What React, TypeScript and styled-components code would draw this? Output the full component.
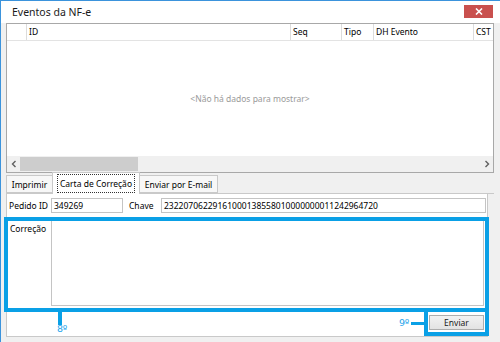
import React from "react";
import styled, { createGlobalStyle } from "styled-components";

const Global = createGlobalStyle`
  html, body { margin: 0; padding: 0; background: #f0f0f0; }
  * { box-sizing: border-box; }
`;

const ANNOT = "#0aa0e6";

const Window = styled.div`
  position: relative;
  width: 500px;
  height: 342px;
  background: #f0f0f0;
  border-top: 1px solid #3b93dc;
  border-left: 1px solid #3b93dc;
  overflow: hidden;
  font-family: "Noto Sans", "Open Sans", sans-serif;
  font-size: 8.5px;
  color: #000;
`;

const TitleBar = styled.div`
  height: 22px;
  background: #ffffff;
  display: flex;
  justify-content: space-between;
  align-items: flex-start;
  padding: 0 7px 0 11px;
`;

const Title = styled.div`
  font-size: 10.5px;
  line-height: 14px;
  margin-top: 4px;
  color: #1a1a1a;
`;

const CloseButton = styled.div`
  width: 29px;
  height: 13px;
  margin-top: 4px;
  background: #c9504e;
  display: flex;
  align-items: center;
  justify-content: center;
`;

const Content = styled.div`
  padding: 0 6px 0 5px;
`;

const Grid = styled.div`
  height: 150px;
  border: 1px solid #a8a8a8;
  background: #ffffff;
  display: flex;
  flex-direction: column;
`;

const HeaderRow = styled.div`
  height: 17px;
  display: grid;
  grid-template-columns: 20px 264px 51px 32px 100px 1fr;
  border-bottom: 1px solid #e3e3e3;
`;

const HeaderCell = styled.div<{ $last?: boolean }>`
  border-right: ${(p) => (p.$last ? "none" : "1px solid #dcdcdc")};
  padding-left: 2px;
  line-height: 16px;
  white-space: nowrap;
  overflow: hidden;
`;

const GridBody = styled.div`
  flex: 1;
  display: flex;
  align-items: center;
  justify-content: center;
  color: #9a9a9a;
`;

const HScroll = styled.div`
  height: 16px;
  background: #f0f0f0;
  display: flex;
  align-items: center;
`;

const ScrollArrow = styled.div`
  width: 13px;
  height: 14px;
  display: flex;
  align-items: center;
  justify-content: center;
`;

const ScrollTrack = styled.div`
  flex: 1;
  height: 14px;
  display: flex;
  align-items: stretch;
`;

const ScrollThumb = styled.div`
  width: 118px;
  background: #cdcdcd;
`;

const TabStrip = styled.div`
  height: 21px;
  display: flex;
  align-items: flex-end;
  border-bottom: 1px solid #c9c9c9;
`;

const Tab = styled.div<{ $active?: boolean; $w: number }>`
  width: ${(p) => p.$w}px;
  height: ${(p) => (p.$active ? 22 : 18)}px;
  margin-bottom: ${(p) => (p.$active ? -1 : 0)}px;
  background: ${(p) => (p.$active ? "#ffffff" : "#f7f7f7")};
  border: 1px solid #c9c9c9;
  border-bottom: ${(p) => (p.$active ? "none" : "1px solid #c9c9c9")};
  margin-left: ${(p) => (p.$active ? -1 : 0)}px;
  margin-right: ${(p) => (p.$active ? -1 : 0)}px;
  position: relative;
  z-index: ${(p) => (p.$active ? 1 : 0)};
  display: flex;
  align-items: center;
  justify-content: center;
  white-space: nowrap;
`;

const FocusLabel = styled.span`
  outline: 1px dotted #333;
  padding: 2px 2px;
  line-height: 13px;
`;

const Panel = styled.div`
  width: 482px;
  height: 143px;
  background: #ffffff;
  border: 1px solid #c9c9c9;
  border-top: none;
  display: flex;
  flex-direction: column;
  padding: 4px 1px 0 2px;
`;

const FieldRow = styled.div`
  display: flex;
  align-items: center;
  height: 15px;
`;

const Label = styled.div<{ $w: number; $ml?: number }>`
  width: ${(p) => p.$w}px;
  margin-left: ${(p) => p.$ml ?? 0}px;
  white-space: nowrap;
`;

const Input = styled.div<{ $w?: number }>`
  ${(p) => (p.$w ? `width: ${p.$w}px;` : "flex: 1;")}
  height: 15px;
  border: 1px solid #c4c4c4;
  background: #ffffff;
  padding-left: 2px;
  line-height: 13px;
  white-space: nowrap;
  overflow: hidden;
`;

const MemoRow = styled.div`
  display: flex;
  height: 86px;
  margin-top: 7px;
  margin-right: 2px;
`;

const MemoLabel = styled.div`
  width: 42px;
  padding-left: 1px;
  padding-top: 3px;
`;

const Memo = styled.div`
  flex: 1;
  border: 1px solid #c4c4c4;
  background: #ffffff;
`;

const ButtonRow = styled.div`
  display: flex;
  justify-content: flex-end;
  margin-top: 9px;
  padding-right: 2px;
`;

const Button = styled.div`
  width: 55px;
  height: 15px;
  border: 1px solid #adadad;
  background: linear-gradient(#f2f2f2, #e3e3e3);
  display: flex;
  align-items: center;
  justify-content: center;
  color: #1a1a1a;
`;

const HighlightBox = styled.div<{ $x: number; $y: number; $w: number; $h: number }>`
  position: absolute;
  left: ${(p) => p.$x}px;
  top: ${(p) => p.$y}px;
  width: ${(p) => p.$w}px;
  height: ${(p) => p.$h}px;
  border: 4px solid ${ANNOT};
  pointer-events: none;
`;

const Connector = styled.div<{ $x: number; $y: number; $w: number; $h: number }>`
  position: absolute;
  left: ${(p) => p.$x}px;
  top: ${(p) => p.$y}px;
  width: ${(p) => p.$w}px;
  height: ${(p) => p.$h}px;
  background: ${ANNOT};
`;

const StepLabel = styled.div<{ $x: number; $y: number }>`
  position: absolute;
  left: ${(p) => p.$x}px;
  top: ${(p) => p.$y}px;
  color: #1ea5ec;
  font-family: "DejaVu Sans", "Noto Sans", sans-serif;
  font-size: 9.5px;
  line-height: 12px;
  letter-spacing: -0.3px;
`;

const Chevron = ({ dir }: { dir: "l" | "r" }) => (
  <svg width="6" height="8" viewBox="0 0 6 8">
    <path
      d={dir === "l" ? "M4.5 1 L1.5 4 L4.5 7" : "M1.5 1 L4.5 4 L1.5 7"}
      fill="none"
      stroke="#606060"
      strokeWidth="1.4"
    />
  </svg>
);

export default function App() {
  return (
    <>
      <Global />
      <Window>
        <TitleBar>
          <Title>Eventos da NF-e</Title>
          <CloseButton>
            <svg width="8" height="7" viewBox="0 0 8 7">
              <path d="M1 0.5 L7 6.5 M7 0.5 L1 6.5" stroke="#fff" strokeWidth="1.6" />
            </svg>
          </CloseButton>
        </TitleBar>
        <Content>
          <Grid>
            <HeaderRow>
              <HeaderCell />
              <HeaderCell>ID</HeaderCell>
              <HeaderCell>Seq</HeaderCell>
              <HeaderCell>Tipo</HeaderCell>
              <HeaderCell>DH Evento</HeaderCell>
              <HeaderCell $last>CST</HeaderCell>
            </HeaderRow>
            <GridBody>&lt;Não há dados para mostrar&gt;</GridBody>
            <HScroll>
              <ScrollArrow>
                <Chevron dir="l" />
              </ScrollArrow>
              <ScrollTrack>
                <ScrollThumb />
              </ScrollTrack>
              <ScrollArrow>
                <Chevron dir="r" />
              </ScrollArrow>
            </HScroll>
          </Grid>
          <TabStrip>
            <Tab $w={47}>Imprimir</Tab>
            <Tab $w={88} $active>
              <FocusLabel>Carta de Correção</FocusLabel>
            </Tab>
            <Tab $w={79}>Enviar por E-mail</Tab>
          </TabStrip>
          <Panel>
            <FieldRow>
              <Label $w={42}>Pedido ID</Label>
              <Input $w={72}>349269</Input>
              <Label $w={32} $ml={6}>Chave</Label>
              <Input>23220706229161000138558010000000011242964720</Input>
            </FieldRow>
            <MemoRow>
              <MemoLabel>Correção</MemoLabel>
              <Memo />
            </MemoRow>
            <ButtonRow>
              <Button>Enviar</Button>
            </ButtonRow>
          </Panel>
        </Content>
        <HighlightBox $x={3} $y={216} $w={485} $h={95} />
        <HighlightBox $x={423} $y={307} $w={65} $h={28} />
        <Connector $x={57} $y={310} $w={4} $h={14} />
        <StepLabel $x={56} $y={322}>8º</StepLabel>
        <Connector $x={410} $y={321} $w={14} $h={3} />
        <StepLabel $x={398} $y={316}>9º</StepLabel>
      </Window>
    </>
  );
}
